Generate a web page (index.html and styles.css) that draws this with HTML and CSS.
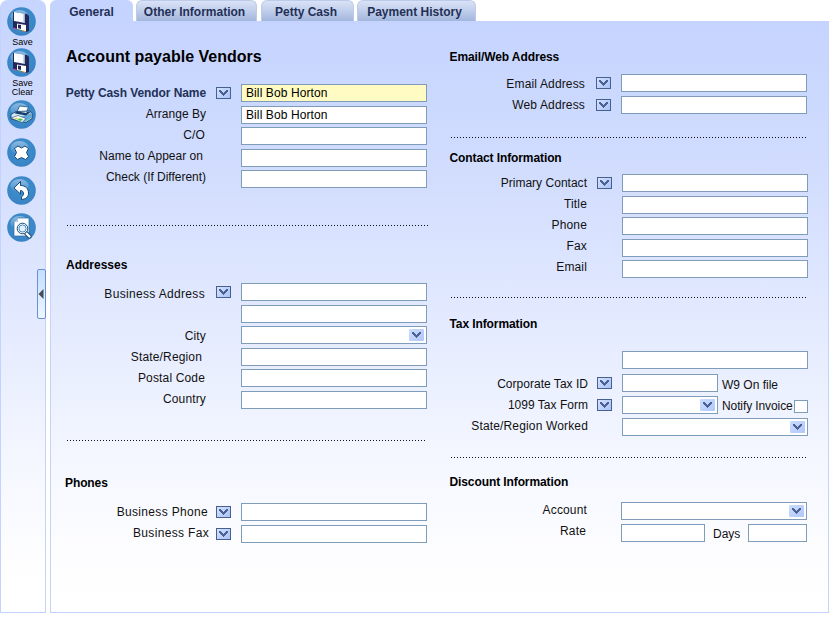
FILE: index.html
```html
<!DOCTYPE html>
<html lang="en">
<head>
<meta charset="utf-8">
<title>Account payable Vendors</title>
<link rel="stylesheet" href="styles.css">
</head>
<body>
<svg class="defs" width="0" height="0">
  <defs>
    <radialGradient id="disc" cx="50%" cy="40%" r="65%"><stop offset="0" stop-color="#4290d0"/><stop offset=".7" stop-color="#3a87c8"/><stop offset="1" stop-color="#3780c0"/></radialGradient>
    <linearGradient id="shine" x1="0" y1="0" x2="0" y2="1"><stop offset="0" stop-color="#fff" stop-opacity=".4"/><stop offset="1" stop-color="#fff" stop-opacity=".04"/></linearGradient>
    <g id="ball"><circle cx="14.5" cy="14.5" r="14.3" fill="url(#disc)"/><ellipse cx="12.5" cy="9.5" rx="9" ry="6.5" fill="url(#shine)"/></g>
    <g id="floppy">
      <path d="M6 5l14 2 2 2v15l-3 1-13-4z" fill="#23285a"/>
      <path d="M7 5l3 .5v9l-3-.5z" fill="#fff"/>
      <path d="M10 5.500l8 1.200v9.300l-8-1.500z" fill="#f7f9fd"/>
      <path d="M16.500 6.500l1.500.2v9.300l-1.500-.3z" fill="#9fb3d6"/>
      <path d="M10 16.500l9 1.500v6.500l-9-2.500z" fill="#fff"/>
      <path d="M11 17.500l3 .5v4l-3-.7z" fill="#23285a"/>
      <path d="M6 20.500l4 1.200v1L6 21.500z" fill="#d04ca0"/><path d="M11 22l3 .8v1l-3-.8z" fill="#51b46c"/><path d="M15 23l3 .8v1l-3-.8z" fill="#e2a13a"/>
    </g>
    <path id="chev" d="M0 0h2v1h1v1h1v1h1v-1h1v-1h1v-1h2v2h-1v1h-1v1h-1v1h-1v1h-1v-1h-1v-1h-1v-1h-1v-1h-1z" fill="#4b6193"/>
  </defs>
</svg>
<div class="app">
  <nav class="rail">
    <a class="tool save"><svg width="29" height="29"><use href="#ball"/><use href="#floppy"/></svg><span>Save</span></a>
    <a class="tool clear"><svg width="29" height="29"><use href="#ball"/><use href="#floppy"/></svg><span>Save<br>Clear</span></a>
    <a class="tool print"><svg width="29" height="29"><use href="#ball"/>
      <path d="M12.500 6l9 1-2.500 6-9-1z" fill="#fff" stroke="#164f83" stroke-width=".8"/>
      <path d="M4 14.500l5-3 14-.5 2 2.500v5L19 22.500 4 19z" fill="#d4e9f6" stroke="#17456f" stroke-width=".9"/>
      <path d="M13 17l11-4v5l-6 4-5-2z" fill="#62a9d6"/>
      <path d="M8 12.500l3-1 8 1.500 2-1.500 2.500.5-4.500 3.500-11-2z" fill="#183f68"/>
      <path d="M4 18l7-2.500 8 3-4 4z" fill="#fff" stroke="#17456f" stroke-width=".6"/><path d="M10 19.500l3-1.300 3 1-2 2z" fill="#4dc54c"/><path d="M7 18.500l2.500-1 2 .7-2 1z" fill="#e9d636"/></svg></a>
    <a class="tool delete"><svg width="29" height="29"><use href="#ball"/><path d="M7.500 10.500L11 8l3.500 2L18 8l3.500 2.500-2 4 2 4L18.500 21.500l-4-2-4 2L7.500 18.500l2-4z" fill="#fff" stroke="#174a7b" stroke-linejoin="round"/></svg></a>
    <a class="tool undo"><svg width="29" height="29"><use href="#ball"/><path d="M13.500 5.500v4c5 0 8 3 8 7.500 0 4-2.500 6-7 6.500v-2.500c3-2 2.500-6.500-1-6.500v3.500L7 12z" fill="#fff" stroke="#174a7b" stroke-linejoin="round"/></svg></a>
    <a class="tool preview"><svg width="29" height="29"><use href="#ball"/><path d="M11 5h11v18H7V9z" fill="#fff" stroke="#2869a0" stroke-width=".7"/><path d="M7 9h4V5z" fill="#adcae3"/><path d="M19 20l3.500 3.500" stroke="#174a7b" stroke-width="4.400" stroke-linecap="round"/><path d="M19.500 20.500l3 3" stroke="#fff" stroke-width="2.400" stroke-linecap="round"/><circle cx="15.500" cy="15.500" r="5.300" fill="#fff" stroke="#174a7b"/><circle cx="15.500" cy="15.500" r="3.600" fill="#e1f1ff" stroke="#4487bd"/></svg></a>
    <div class="handle"><svg width="6" height="10"><path d="M5.500 0v10L.5 5z" fill="#454c58"/></svg></div>
  </nav>
  <main class="main">
    <div class="tabs">
      <div class="tab active">General</div>
      <div class="tab other">Other Information</div>
      <div class="tab petty">Petty Cash</div>
      <div class="tab history">Payment History</div>
    </div>
    <div class="panel">
      <div class="col left">
        <h1>Account payable Vendors</h1>
        <section class="form vendor">
          <div class="labels"><label class="strong">Petty Cash Vendor Name</label><label class="tight">Arrange By</label><label class="in1">C/O</label><label class="in3 tight">Name to Appear on</label><label class="tighter">Check (If Different)</label></div>
          <div class="controls">
            <div class="row"><i class="btn"><svg width="9" height="6"><use href="#chev"/></svg></i><div class="field required">Bill Bob Horton</div></div>
            <div class="row"><div class="field">Bill Bob Horton</div></div>
            <div class="row"><div class="field"></div></div>
            <div class="row"><div class="field"></div></div>
            <div class="row"><div class="field"></div></div>
          </div>
        </section>
        <div class="rule r1"></div>
        <h2 class="h-address">Addresses</h2>
        <section class="form address">
          <div class="labels"><label class="in1 wide">Business Address</label><label></label><label>City</label><label class="in4">State/Region</label><label class="in1">Postal Code</label><label>Country</label></div>
          <div class="controls">
            <div class="row"><i class="btn"><svg width="9" height="6"><use href="#chev"/></svg></i><div class="field"></div></div>
            <div class="row"><div class="field"></div></div>
            <div class="row"><div class="field"><i class="drop"><svg width="9" height="6"><use href="#chev"/></svg></i></div></div>
            <div class="row"><div class="field"></div></div>
            <div class="row"><div class="field"></div></div>
            <div class="row"><div class="field"></div></div>
          </div>
        </section>
        <div class="rule r2"></div>
        <h2 class="h-phones">Phones</h2>
        <section class="form phones">
          <div class="labels"><label class="in1 wide">Business Phone</label><label class="wide">Business Fax</label></div>
          <div class="controls tall">
            <div class="row"><i class="btn"><svg width="9" height="6"><use href="#chev"/></svg></i><div class="field"></div></div>
            <div class="row"><i class="btn"><svg width="9" height="6"><use href="#chev"/></svg></i><div class="field"></div></div>
          </div>
        </section>
      </div>
      <div class="col right">
        <h2 class="h-email">Email/Web Address</h2>
        <section class="form email">
          <div class="labels"><label>Email Address</label><label>Web Address</label></div>
          <div class="controls tall">
            <div class="row"><i class="btn"><svg width="9" height="6"><use href="#chev"/></svg></i><div class="field"></div></div>
            <div class="row"><i class="btn"><svg width="9" height="6"><use href="#chev"/></svg></i><div class="field"></div></div>
          </div>
        </section>
        <div class="rule r3"></div>
        <h2 class="h-contact">Contact Information</h2>
        <section class="form contact">
          <div class="labels"><label class="tight">Primary Contact</label><label>Title</label><label>Phone</label><label>Fax</label><label>Email</label></div>
          <div class="controls">
            <div class="row"><i class="btn"><svg width="9" height="6"><use href="#chev"/></svg></i><div class="field"></div></div>
            <div class="row"><div class="field"></div></div>
            <div class="row"><div class="field"></div></div>
            <div class="row"><div class="field"></div></div>
            <div class="row"><div class="field"></div></div>
          </div>
        </section>
        <div class="rule r4"></div>
        <h2 class="h-tax">Tax Information</h2>
        <section class="form tax">
          <div class="labels"><label class="tight">Corporate Tax ID</label><label class="tight">1099 Tax Form</label><label>State/Region Worked</label></div>
          <div class="controls tall">
            <div class="row first"><div class="field"></div></div>
            <div class="row"><i class="btn"><svg width="9" height="6"><use href="#chev"/></svg></i><div class="field half"></div><span class="note w9">W9 On file</span></div>
            <div class="row"><i class="btn"><svg width="9" height="6"><use href="#chev"/></svg></i><div class="field half"><i class="drop"><svg width="9" height="6"><use href="#chev"/></svg></i></div><span class="note notify">Notify Invoice</span><span class="check"></span></div>
            <div class="row"><div class="field"><i class="drop"><svg width="9" height="6"><use href="#chev"/></svg></i></div></div>
          </div>
        </section>
        <div class="rule r5"></div>
        <h2 class="h-discount">Discount Information</h2>
        <section class="form discount">
          <div class="labels"><label>Account</label><label class="in1">Rate</label></div>
          <div class="controls tall">
            <div class="row"><div class="field"><i class="drop"><svg width="9" height="6"><use href="#chev"/></svg></i></div></div>
            <div class="row"><div class="field rate"></div><span class="note days">Days</span><div class="field days-field"></div></div>
          </div>
        </section>
      </div>
    </div>
  </main>
</div>
</body>
</html>
```
FILE: styles.css
```css
* { box-sizing: border-box; }
body { margin: 0; background: #fff; color: #111; font: 12px/14px "Liberation Sans", Arial, sans-serif; overflow: hidden; }
.defs { display: block; height: 0; }
.app { display: flex; gap: 4px; width: 829px; height: 613px; }
svg { display: block; }

.rail { position: relative; width: 46px; flex: none; border: 1px solid #c3d3ff; border-top: 0; border-radius: 8px 8px 0 0; background: linear-gradient(#c6d5ff, #d5dffe 30%, #e4eaff 53%, #f3f6ff 73%, #fefeff 92%, #fff); padding: 7px 0 0 6px; }
.tool { display: block; width: 31px; }
.tool span { display: block; margin-top: 2px; margin-bottom: -1px; text-align: center; font-size: 9px; line-height: 9px; color: #000; }
.clear { margin-top: 2px; }
.print { margin-top: 4px; }
.delete { margin-top: 9px; }
.undo { margin-top: 9px; }
.preview { margin-top: 8px; }
.handle { position: absolute; left: 36px; top: 269px; width: 9px; height: 50px; border: 1px solid #6e8fd0; border-radius: 2px; background: linear-gradient(#c3e0ff, #edf6ff); display: flex; align-items: center; }

.main { flex: 1; display: flex; flex-direction: column; }
.tabs { display: flex; height: 21px; align-items: stretch; }
.tab { border: 1px solid #bccbea; border-bottom: 0; border-radius: 6px 6px 0 0; background: linear-gradient(#d9e2f6, #c3d0ec 45%, #a2b5dc); color: #223056; font-weight: bold; line-height: 22px; text-align: center; white-space: nowrap; }
.active { width: 83px; margin-right: 3px; border-color: #c5d4ff; background: #c5d4ff; line-height: 22px; }
.other { width: 121px; margin-right: 4px; padding-right: 4px; }
.petty { width: 93px; margin-right: 3px; padding-right: 3px; }
.history { width: 119px; padding-right: 4px; }

.panel { flex: 1; display: flex; border: 1px solid #c3d3ff; border-top: 0; background: linear-gradient(#c5d4ff, #d3defe 28%, #e6ecff 54%, #f4f7ff 74%, #fdfdff 90%, #fff); padding-left: 15px; }
.col { display: flex; flex-direction: column; align-items: flex-start; }
.left { width: 384px; }
.right { width: 360px; }
h1 { margin: 26px 0 0; font-size: 16px; line-height: 20px; color: #000; white-space: nowrap; }
h2 { margin: 0; font-size: 12px; line-height: 14px; letter-spacing: -.1px; color: #000; white-space: nowrap; }
.right h2 { margin-left: -.5px; }
.h-address { margin-top: 32px; letter-spacing: 0; }
.h-phones { margin-top: 35px; margin-left: -1px; }
.h-email { margin-top: 29px; }
.h-contact { margin-top: 13px; }
.h-tax { margin-top: 19px; }
.h-discount { margin-top: 17px; }

.form { display: flex; }
.labels { display: flex; flex-direction: column; align-items: flex-end; flex: none; width: 140px; margin-right: 10px; }
.labels label { height: 21px; line-height: 21px; letter-spacing: .15px; white-space: nowrap; }
.labels .wide { letter-spacing: .33px; }
.labels .tight { letter-spacing: .02px; }
.labels .tighter { letter-spacing: -.02px; }
.labels .strong { font-weight: bold; color: #223056; letter-spacing: -.08px; }
.labels .in1 { margin-right: 1px; }
.labels .in3 { margin-right: 3px; }
.labels .in4 { margin-right: 4px; }
.row { display: flex; align-items: flex-start; justify-content: flex-end; width: 211px; height: 21.5px; }
.tall .row { height: 22px; }
.tall .first { height: 23px; }
.btn { display: flex; flex: none; justify-content: center; align-items: center; width: 15px; height: 12px; margin: 3px auto 0 0; border: 1px solid #47608f; background: linear-gradient(135deg, #d4e2fc, #a9c3f8); }
.field { display: flex; flex: none; justify-content: flex-end; width: 186px; height: 18px; border: 1px solid #7f9db9; background: #fff; line-height: 17px; letter-spacing: .1px; color: #000; }
.vendor .field { justify-content: flex-start; padding-left: 4px; }
.required { background: #fffbc3; }
.drop { display: flex; justify-content: center; align-items: center; width: 15px; height: 12px; margin: 2px; border-radius: 1px; background: linear-gradient(135deg, #cbdcfd, #b0c7fa); }
.half { width: 96px; }
.note { flex: none; white-space: nowrap; line-height: 21px; color: #111; }
.check { flex: none; width: 14px; height: 13px; margin-top: 4px; border: 1px solid #7f9db9; background: #fff; }
.w9 { width: 90px; padding-left: 4px; padding-top: 1px; letter-spacing: 0; }
.notify { width: 76px; padding-left: 4px; letter-spacing: -.1px; }
.rate { width: 84px; }
.days { width: 43px; padding-left: 8px; }
.days-field { width: 59px; }

.vendor { height: 108px; margin-top: 17px; }
.vendor .labels { margin-top: -1px; }
.address { height: 129px; margin-top: 11px; }
.address .labels { margin-top: 1px; }
.phones { margin-top: 13px; }
.phones .labels { width: 143px; margin-right: 7px; margin-top: -1px; }
.email { height: 43px; margin-top: 10px; }
.email .labels { width: 135px; margin-right: 11px; }
.contact { height: 108px; margin-top: 9px; }
.contact .labels { width: 137px; margin-top: -1px; }
.tax { height: 89px; margin-top: 20px; }
.tax .labels { width: 138px; margin-right: 9px; margin-top: 23px; }
.discount { margin-top: 13px; }
.discount .labels { width: 137px; margin-right: 9px; margin-top: -2px; }

.rule { width: 356px; height: 1px; background: repeating-linear-gradient(90deg, #111 0 1px, transparent 1px 3px); }
.r1 { width: 362px; margin-top: 33px; margin-left: 1px; }
.r2 { width: 360px; margin-top: 28px; margin-left: 1px; }
.r3 { margin-top: 20px; margin-left: 1px; }
.r4 { margin-top: 15px; margin-left: 1px; }
.r5 { margin-top: 17px; margin-left: 1px; }
```
